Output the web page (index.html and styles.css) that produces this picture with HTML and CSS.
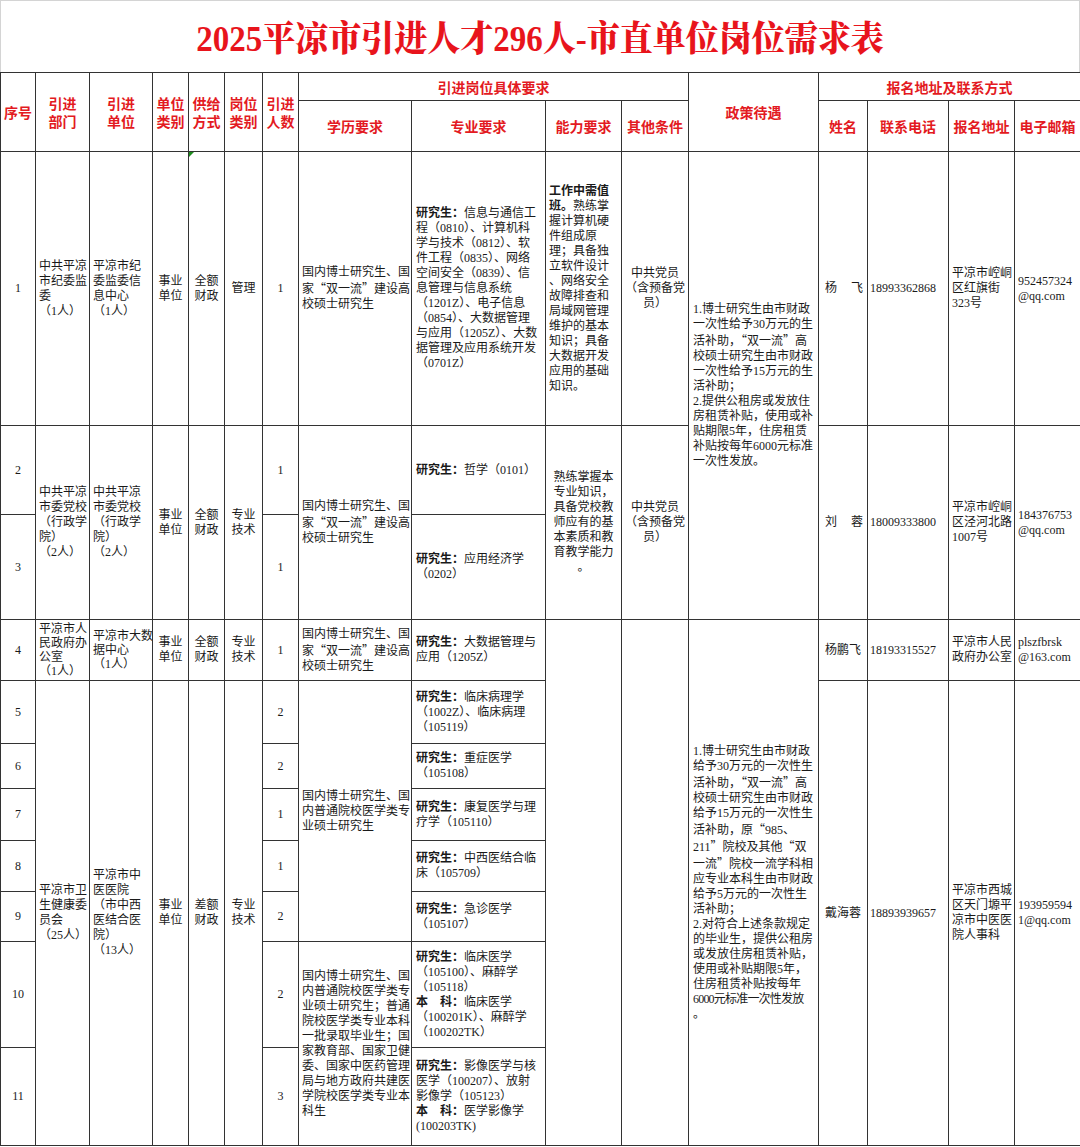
FILE: index.html
```html
<!DOCTYPE html>
<html lang="zh-CN">
<head>
<meta charset="utf-8">
<title>2025平凉市引进人才296人-市直单位岗位需求表</title>
<link rel="stylesheet" href="styles.css">
</head>
<body>
<div class="page">
  <div class="title-bar"><h1 class="title">2025平凉市引进人才296人-市直单位岗位需求表</h1></div>
  <table class="grid">
    <colgroup>
      <col class="w35"><col class="w54"><col class="w63"><col class="w36"><col class="w36"><col class="w38"><col class="w36">
      <col class="w113"><col class="w134"><col class="w76"><col class="w67"><col class="w130">
      <col class="w49"><col class="w81"><col class="w66"><col class="w66">
    </colgroup>
    <thead>
      <tr class="ha">
        <th rowspan="2">序号</th>
        <th rowspan="2"><span class="hl">引进</span><span class="hl">部门</span></th>
        <th rowspan="2"><span class="hl">引进</span><span class="hl">单位</span></th>
        <th rowspan="2"><span class="hl">单位</span><span class="hl">类别</span></th>
        <th rowspan="2"><span class="hl">供给</span><span class="hl">方式</span></th>
        <th rowspan="2"><span class="hl">岗位</span><span class="hl">类别</span></th>
        <th rowspan="2"><span class="hl">引进</span><span class="hl">人数</span></th>
        <th colspan="4">引进岗位具体要求</th>
        <th rowspan="2">政策待遇</th>
        <th colspan="4">报名地址及联系方式</th>
      </tr>
      <tr class="hb">
        <th>学历要求</th><th>专业要求</th><th>能力要求</th><th>其他条件</th>
        <th>姓名</th><th>联系电话</th><th>报名地址</th><th>电子邮箱</th>
      </tr>
    </thead>
    <tbody>
      <tr class="r1">
        <td class="ctr">1</td>
        <td>中共平凉<br>市纪委监<br>委<br>（1人）</td>
        <td>平凉市纪<br>委监委信<br>息中心<br>（1人）</td>
        <td class="ctr">事业<br>单位</td>
        <td class="ctr flagged">全额<br>财政<span class="flag"></span></td>
        <td class="ctr">管理</td>
        <td class="ctr">1</td>
        <td>国内博士研究生、国<br>家<span class="q">“</span>双一流<span class="q">”</span>建设高<br>校硕士研究生</td>
        <td class="major"><b>研究生：</b>信息与通信工<br>程（0810）、计算机科<br>学与技术（0812）、软<br>件工程（0835）、网络<br>空间安全（0839）、信<br>息管理与信息系统<br>（1201Z）、电子信息<br>（0854）、大数据管理<br>与应用（1205Z）、大数<br>据管理及应用系统开发<br>（0701Z）</td>
        <td><b>工作中需值<br>班。</b>熟练掌<br>握计算机硬<br>件组成原<br>理；具备独<br>立软件设计<br>、网络安全<br>故障排查和<br>局域网管理<br>维护的基本<br>知识；具备<br>大数据开发<br>应用的基础<br>知识。</td>
        <td class="ctr">中共党员<br>（含预备党<br>员）</td>
        <td rowspan="3" class="policy">1.博士研究生由市财政<br>一次性给予30万元的生<br>活补助，<span class="q">“</span>双一流<span class="q">”</span>高<br>校硕士研究生由市财政<br>一次性给予15万元的生<br>活补助；<br>2.提供公租房或发放住<br>房租赁补贴，使用或补<br>贴期限5年，住房租赁<br>补贴按每年6000元标准<br>一次性发放。</td>
        <td><div class="spread"><span>杨</span><span>飞</span></div></td>
        <td class="tel">18993362868</td>
        <td>平凉市崆峒<br>区红旗街<br>323号</td>
        <td>952457324<br>@qq.com</td>
      </tr>
      <tr class="r2">
        <td class="ctr">2</td>
        <td rowspan="2">中共平凉<br>市委党校<br>（行政学<br>院）<br>（2人）</td>
        <td rowspan="2">中共平凉<br>市委党校<br>（行政学<br>院）<br>（2人）</td>
        <td rowspan="2" class="ctr">事业<br>单位</td>
        <td rowspan="2" class="ctr">全额<br>财政</td>
        <td rowspan="2" class="ctr">专业<br>技术</td>
        <td class="ctr">1</td>
        <td rowspan="2">国内博士研究生、国<br>家<span class="q">“</span>双一流<span class="q">”</span>建设高<br>校硕士研究生</td>
        <td class="major"><b>研究生：</b>哲学（0101）</td>
        <td rowspan="2" class="ctr">熟练掌握本<br>专业知识，<br>具备党校教<br>师应有的基<br>本素质和教<br>育教学能力<br>。</td>
        <td rowspan="2" class="ctr">中共党员<br>（含预备党<br>员）</td>
        <td rowspan="2"><div class="spread"><span>刘</span><span>蓉</span></div></td>
        <td rowspan="2" class="tel">18009333800</td>
        <td rowspan="2">平凉市崆峒<br>区泾河北路<br>1007号</td>
        <td rowspan="2">184376753<br>@qq.com</td>
      </tr>
      <tr class="r3">
        <td class="ctr">3</td>
        <td class="ctr">1</td>
        <td class="major"><b>研究生：</b>应用经济学<br>（0202）</td>
      </tr>
      <tr class="r4">
        <td class="ctr">4</td>
        <td class="dense">平凉市人<br>民政府办<br>公室<br>（1人）</td>
        <td class="dense">平凉市大数<br>据中心<br>（1人）</td>
        <td class="ctr">事业<br>单位</td>
        <td class="ctr">全额<br>财政</td>
        <td class="ctr">专业<br>技术</td>
        <td class="ctr">1</td>
        <td>国内博士研究生、国<br>家<span class="q">“</span>双一流<span class="q">”</span>建设高<br>校硕士研究生</td>
        <td class="major"><b>研究生：</b>大数据管理与<br>应用（1205Z）</td>
        <td rowspan="8"></td>
        <td rowspan="8"></td>
        <td rowspan="8" class="policy">1.博士研究生由市财政<br>给予30万元的一次性生<br>活补助，<span class="q">“</span>双一流<span class="q">”</span>高<br>校硕士研究生由市财政<br>给予15万元的一次性生<br>活补助，原<span class="q">“</span>985、<br>211<span class="q">”</span>院校及其他<span class="q">“</span>双<br>一流<span class="q">”</span>院校一流学科相<br>应专业本科生由市财政<br>给予5万元的一次性生<br>活补助；<br>2.对符合上述条款规定<br>的毕业生，提供公租房<br>或发放住房租赁补贴，<br>使用或补贴期限5年，<br>住房租赁补贴按每年<br><span class="squeeze">6000元标准一次性发放</span><br>。</td>
        <td class="ctr">杨鹏飞</td>
        <td class="tel">18193315527</td>
        <td>平凉市人民<br>政府办公室</td>
        <td>plszfbrsk<br>@163.com</td>
      </tr>
      <tr class="r5">
        <td class="ctr">5</td>
        <td rowspan="7">平凉市卫<br>生健康委<br>员会<br>（25人）</td>
        <td rowspan="7">平凉市中<br>医医院<br>（市中西<br>医结合医<br>院）<br>（13人）</td>
        <td rowspan="7" class="ctr">事业<br>单位</td>
        <td rowspan="7" class="ctr">差额<br>财政</td>
        <td rowspan="7" class="ctr">专业<br>技术</td>
        <td class="ctr">2</td>
        <td rowspan="5">国内博士研究生、国<br>内普通院校医学类专<br>业硕士研究生</td>
        <td class="major"><b>研究生：</b>临床病理学<br>（1002Z）、临床病理<br>（105119）</td>
        <td rowspan="7" class="ctr">戴海蓉</td>
        <td rowspan="7" class="tel">18893939657</td>
        <td rowspan="7">平凉市西城<br>区天门塬平<br>凉市中医医<br>院人事科</td>
        <td rowspan="7">193959594<br>1@qq.com</td>
      </tr>
      <tr class="r6">
        <td class="ctr">6</td>
        <td class="ctr">2</td>
        <td class="major"><b>研究生：</b>重症医学<br>（105108）</td>
      </tr>
      <tr class="r7">
        <td class="ctr">7</td>
        <td class="ctr">1</td>
        <td class="major"><b>研究生：</b>康复医学与理<br>疗学（105110）</td>
      </tr>
      <tr class="r8">
        <td class="ctr">8</td>
        <td class="ctr">1</td>
        <td class="major"><b>研究生：</b>中西医结合临<br>床（105709）</td>
      </tr>
      <tr class="r9">
        <td class="ctr">9</td>
        <td class="ctr">2</td>
        <td class="major"><b>研究生：</b>急诊医学<br>（105107）</td>
      </tr>
      <tr class="r10">
        <td class="ctr">10</td>
        <td class="ctr">2</td>
        <td rowspan="2">国内博士研究生、国<br>内普通院校医学类专<br>业硕士研究生；普通<br>院校医学类专业本科<br>一批录取毕业生；国<br>家教育部、国家卫健<br>委、国家中医药管理<br>局与地方政府共建医<br>学院校医学类专业本<br>科生</td>
        <td class="major"><b>研究生：</b>临床医学<br>（105100）、麻醉学<br>（105118）<br><b>本　科：</b>临床医学<br>（100201K）、麻醉学<br>（100202TK）</td>
      </tr>
      <tr class="r11">
        <td class="ctr">11</td>
        <td class="ctr">3</td>
        <td class="major"><b>研究生：</b>影像医学与核<br>医学（100207）、放射<br>影像学（105123）<br><b>本　科：</b>医学影像学<br>(100203TK)</td>
      </tr>
    </tbody>
  </table>
</div>
</body>
</html>
```

FILE: styles.css
```css
* { box-sizing: border-box; }
html, body { margin: 0; padding: 0; background: #fff; }
body {
  font-family: "Liberation Serif", "Noto Sans CJK SC", serif;
  color: #1a1a1a;
}
.page { width: 1080px; }

.title-bar {
  height: 72px;
  border: 1px solid #d4d4d4;
  border-bottom: none;
  display: flex;
  align-items: center;
  justify-content: center;
}
.title {
  margin: 0;
  font-family: "Liberation Serif", "Noto Serif CJK SC", "Noto Sans CJK SC", serif;
  font-weight: 900;
  font-size: 33px;
  line-height: 36px;
  color: #e8141c;
  transform: scaleY(1.08);
  padding-top: 4px;
}

.grid {
  width: 1080px;
  border-collapse: collapse;
  table-layout: fixed;
}
.w35 { width: 35px; } .w54 { width: 54px; } .w63 { width: 63px; }
.w36 { width: 36px; } .w38 { width: 38px; } .w113 { width: 113px; }
.w134 { width: 134px; } .w76 { width: 76px; } .w67 { width: 67px; }
.w130 { width: 130px; } .w49 { width: 49px; } .w81 { width: 81px; }
.w66 { width: 66px; }

.grid th, .grid td {
  border: 1px solid #333;
  vertical-align: middle;
}
.grid th {
  font-family: "Noto Sans CJK SC", sans-serif;
  font-size: 14px;
  line-height: 18px;
  font-weight: 700;
  color: #e31a22;
  text-align: center;
  padding: 0 1px;
}
.hl {
  display: block;
  line-height: 18px;
  height: 18px;
}
.grid td {
  font-size: 12px;
  line-height: 15px;
  text-align: left;
  white-space: nowrap;
  padding: 0 2px 0 3px;
  overflow: hidden;
}
.grid td b { font-weight: 700; }
.grid td.ctr { text-align: center; padding: 0 2px; }
.grid td.major { padding-left: 4px; }
.grid td.policy { padding-left: 4px; padding-right: 1px; }
.grid td.tel { padding-left: 2px; }
.grid td.dense { line-height: 14px; }

.q {
  font-family: "Noto Sans CJK SC", sans-serif;
  font-feature-settings: "fwid" 1;
}
.squeeze { letter-spacing: -0.8px; }

.spread {
  display: flex;
  justify-content: space-between;
  padding: 0 2px 0 3px;
}

.flagged { position: relative; }
.flag {
  position: absolute;
  left: 0;
  top: 0;
  width: 0;
  height: 0;
  border-top: 5px solid #1e8c1e;
  border-right: 5px solid transparent;
}

.ha { height: 28px; }
.hb { height: 51px; }
.r1 { height: 274px; }
.r2 { height: 89px; }
.r3 { height: 105px; }
.r4 { height: 61px; }
.r5 { height: 63px; }
.r6 { height: 45px; }
.r7 { height: 52px; }
.r8 { height: 51px; }
.r9 { height: 50px; }
.r10 { height: 106px; }
.r11 { height: 98px; }
```
